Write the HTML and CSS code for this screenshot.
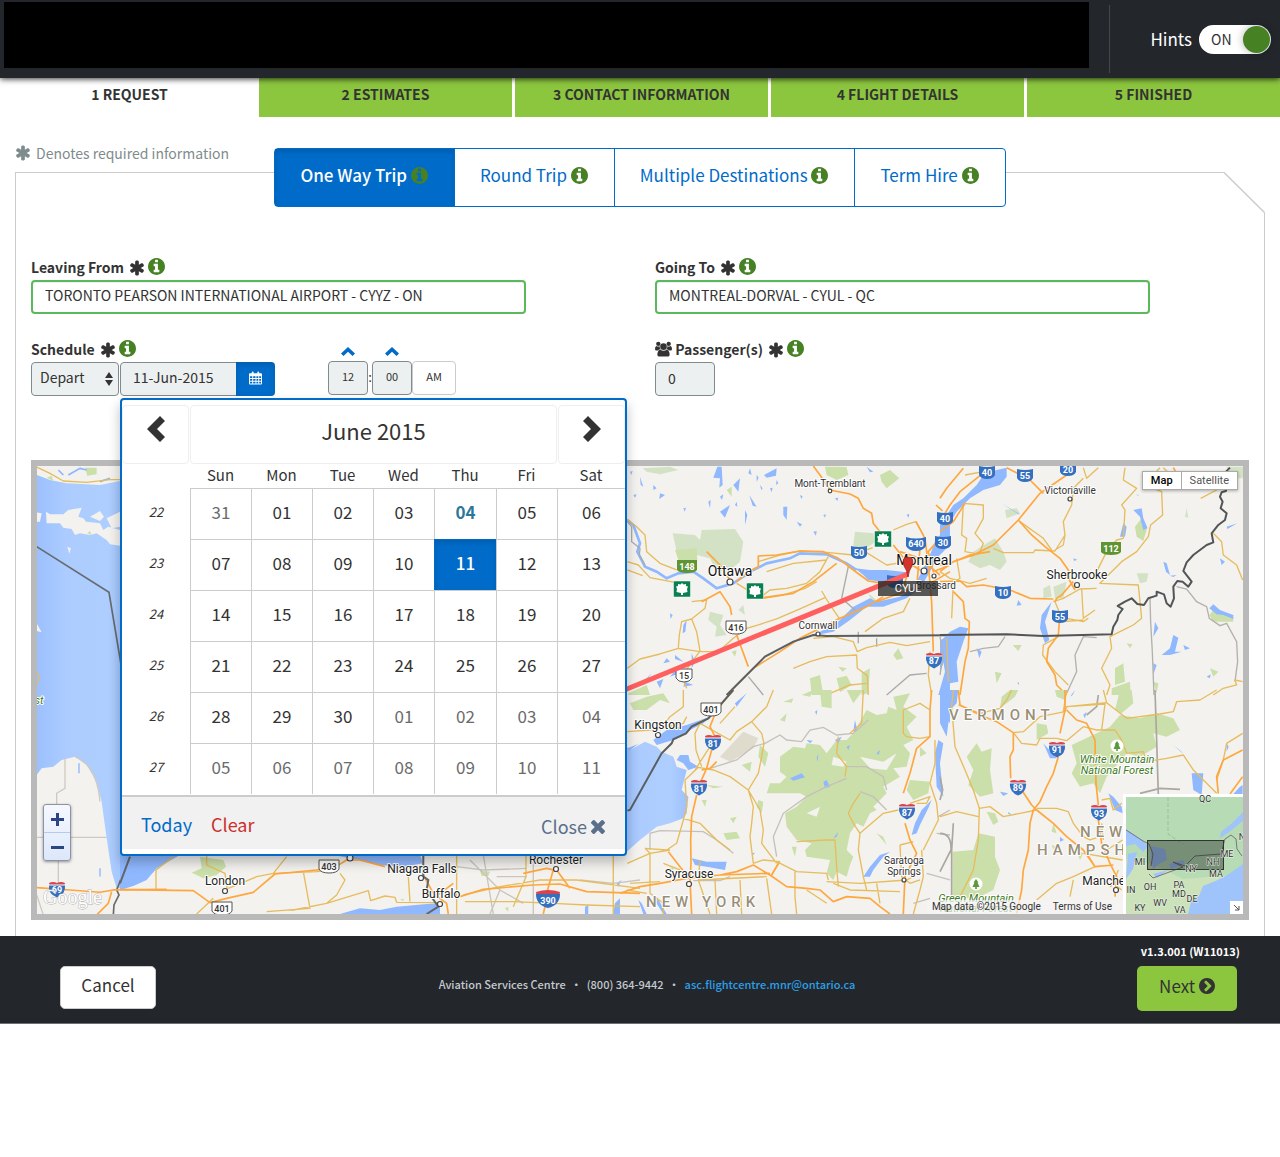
FILE: index.html
```html
<!DOCTYPE html>
<html lang="en">
<head>
<meta charset="utf-8">
<meta name="viewport" content="width=device-width, initial-scale=1">
<title>Flight Request</title>
<link rel="stylesheet" href="styles.css">
</head>
<body>
<svg class="sprite" aria-hidden="true">
  <symbol id="i-star" viewBox="64 64 1664 1664"><path d="M1546 1050q46 26 59.500 77.500t-12.500 97.500l-64 110q-26 46-77.500 59.500t-97.500-12.500l-266-153v307q0 52-38 90t-90 38h-128q-52 0-90-38t-38-90v-307l-266 153q-46 26-97.500 12.500t-77.500-59.500l-64-110q-26-46-12.500-97.500t59.500-77.500l266-154-266-154q-46-26-59.500-77.500t12.500-97.500l64-110q26-46 77.500-59.500t97.500 12.500l266 153v-307q0-52 38-90t90-38h128q52 0 90 38t38 90v307l266-153q46-26 97.500-12.500t77.500 59.500l64 110q26 46 12.500 97.500t-59.500 77.500l-266 154z"/></symbol>
  <symbol id="i-info" viewBox="128 128 1536 1536"><path d="M1152 1376v-160q0-14-9-23t-23-9h-96v-512q0-14-9-23t-23-9h-320q-14 0-23 9t-9 23v160q0 14 9 23t23 9h96v320h-96q-14 0-23 9t-9 23v160q0 14 9 23t23 9h448q14 0 23-9t9-23zm-128-896v-160q0-14-9-23t-23-9h-192q-14 0-23 9t-9 23v160q0 14 9 23t23 9h192q14 0 23-9t9-23zm640 416q0 209-103 385.500t-279.500 279.500-385.500 103-385.500-103-279.500-279.500-103-385.500 103-385.500 279.500-279.500 385.500-103 385.500 103 279.500 279.500 103 385.500z"/></symbol>
  <symbol id="i-times" viewBox="302 302 1188 1188"><path d="M1490 1322q0 40-28 68l-136 136q-28 28-68 28t-68-28l-294-294-294 294q-28 28-68 28t-68-28l-136-136q-28-28-28-68t28-68l294-294-294-294q-28-28-28-68t28-68l136-136q28-28 68-28t68 28l294 294 294-294q28-28 68-28t68 28l136 136q28 28 28 68t-28 68l-294 294 294 294q28 28 28 68z" transform="translate(0 -64)"/></symbol>
  <symbol id="i-next" viewBox="128 128 1536 1536"><path d="M845 1395l454-454q19-19 19-45t-19-45l-454-454q-19-19-45-19t-45 19l-102 102q-19 19-19 45t19 45l307 307-307 307q-19 19-19 45t19 45l102 102q19 19 45 19t45-19zm819-499q0 209-103 385.500t-279.500 279.500-385.500 103-385.500-103-279.500-279.500-103-385.500 103-385.500 279.500-279.500 385.500-103 385.500 103 279.500 279.500 103 385.500z"/></symbol>
  <symbol id="i-cal" viewBox="0 0 14 14"><path fill-rule="evenodd" d="M1 2h2V1q0-1 1-1t1 1v1h4V1q0-1 1-1t1 1v1h2q1 0 1 1v10q0 1-1 1H1q-1 0-1-1V3q0-1 1-1zM1 5v2h2.500V5zm3.500 0v2H7V5zM8 5v2h2V5zm3 0v2h2V5zM1 8v2h2.500V8zm3.500 0v2H7V8zM8 8v2h2V8zm3 0v2h2V8zM1 11v2h2.500v-2zm3.500 0v2H7v-2zM8 11v2h2v-2zm3 0v2h2v-2z"/></symbol>
  <symbol id="i-users" viewBox="0 0 18 16"><circle cx="3.500" cy="2.500" r="2.300"/><circle cx="14.500" cy="2.500" r="2.300"/><circle cx="9" cy="5.500" r="3.500"/><path d="M1.500 4.700Q3 5.900 5 5.200 4.700 7 6 8.600H4.200L3.500 9.500H1Q0 9.500 0 8q0-3 1.500-3.300zM16.500 4.700Q15 5.900 13 5.200 13.300 7 12 8.600h1.800l.7.9H17q1 0 1-1.500 0-3-1.500-3.300zM5.500 8.700Q9 11 12.500 8.700 15.500 9.500 15.500 14q0 2-2 2h-9q-2 0-2-2 0-4.500 3-5.300z"/></symbol>
  <symbol id="i-up" viewBox="0 0 14 9"><path d="M7 0l7 6.500L11.500 9 7 4.700 2.500 9 0 6.500z"/></symbol>
  <symbol id="i-left" viewBox="0 0 18 26"><path d="M13 0l5 5-8 8 8 8-5 5L0 13z"/></symbol>
  <symbol id="i-right" viewBox="0 0 18 26"><path d="M5 0L0 5l8 8-8 8 5 5 13-13z"/></symbol>
</svg>

<header class="topbar">
  <div class="brand"></div>
  <div class="hints">
    <label for="hints">Hints</label>
    <span class="switch"><input type="checkbox" id="hints" checked><span class="switch-text">ON</span></span>
  </div>
</header>

<nav class="steps">
  <a href="#" class="step current">1 REQUEST</a>
  <a href="#" class="step">2 ESTIMATES</a>
  <a href="#" class="step">3 CONTACT INFORMATION</a>
  <a href="#" class="step">4 FLIGHT DETAILS</a>
  <a href="#" class="step">5 FINISHED</a>
</nav>

<main class="page">
  <div class="trip-row">
    <p class="note"><svg class="star"><use href="#i-star"/></svg> Denotes required information</p>
    <div class="tabs">
      <button type="button" class="tab active">One Way Trip <svg class="info"><use href="#i-info"/></svg></button>
      <button type="button" class="tab">Round Trip <svg class="info"><use href="#i-info"/></svg></button>
      <button type="button" class="tab">Multiple Destinations <svg class="info"><use href="#i-info"/></svg></button>
      <button type="button" class="tab">Term Hire <svg class="info"><use href="#i-info"/></svg></button>
    </div>
  </div>

  <form class="panel">
    <svg class="corner" viewBox="0 0 41 41"><path d="M0 0H41V41z" fill="#fff"/><path d="M0 .500L40.500 40.500" stroke="#ccc" stroke-width="1.500" fill="none"/></svg>
    <div class="fields">
      <div class="field">
        <label for="from">Leaving From <svg class="star"><use href="#i-star"/></svg><svg class="info"><use href="#i-info"/></svg></label>
        <input class="box airport" id="from" type="text" value="TORONTO PEARSON INTERNATIONAL AIRPORT - CYYZ - ON">
      </div>
      <div class="field">
        <label for="to">Going To <svg class="star"><use href="#i-star"/></svg><svg class="info"><use href="#i-info"/></svg></label>
        <input class="box airport" id="to" type="text" value="MONTREAL-DORVAL - CYUL - QC">
      </div>
      <div class="schedule">
        <div class="field">
          <label for="date">Schedule <svg class="star"><use href="#i-star"/></svg><svg class="info"><use href="#i-info"/></svg></label>
          <div class="date-row">
            <span class="select-wrap">
              <select class="box" aria-label="Schedule type"><option>Depart</option><option>Arrive</option></select>
              <svg class="updown" viewBox="0 0 8 14"><path d="M4 0l4 6H0zM4 14l4-6H0z"/></svg>
            </span>
            <input class="box date" id="date" type="text" value="11-Jun-2015">
            <button type="button" class="cal-btn" aria-label="Open calendar"><svg><use href="#i-cal"/></svg></button>
          </div>
        </div>
        <div class="time">
          <div class="spin"><button type="button" aria-label="Hour up"><svg><use href="#i-up"/></svg></button><input class="box" type="text" value="12" aria-label="Hour"></div>
          <span class="colon">:</span>
          <div class="spin"><button type="button" aria-label="Minute up"><svg><use href="#i-up"/></svg></button><input class="box" type="text" value="00" aria-label="Minute"></div>
          <button type="button" class="ampm">AM</button>
        </div>

        <div class="picker">
          <div class="picker-head">
            <button type="button" aria-label="Previous month"><svg><use href="#i-left"/></svg></button>
            <button type="button" class="month">June 2015</button>
            <button type="button" aria-label="Next month"><svg><use href="#i-right"/></svg></button>
          </div>
          <table>
            <colgroup><col class="c-week"><col class="c-day"><col class="c-day"><col class="c-day"><col class="c-day"><col class="c-thu"><col class="c-day"><col class="c-sat"></colgroup>
            <thead><tr><th></th><th>Sun</th><th>Mon</th><th>Tue</th><th>Wed</th><th>Thu</th><th>Fri</th><th>Sat</th></tr></thead>
            <tbody>
              <tr><th>22</th><td class="out">31</td><td>01</td><td>02</td><td>03</td><td class="today">04</td><td>05</td><td>06</td></tr>
              <tr><th>23</th><td>07</td><td>08</td><td>09</td><td>10</td><td class="picked">11</td><td>12</td><td>13</td></tr>
              <tr><th>24</th><td>14</td><td>15</td><td>16</td><td>17</td><td>18</td><td>19</td><td>20</td></tr>
              <tr><th>25</th><td>21</td><td>22</td><td>23</td><td>24</td><td>25</td><td>26</td><td>27</td></tr>
              <tr><th>26</th><td>28</td><td>29</td><td>30</td><td class="out">01</td><td class="out">02</td><td class="out">03</td><td class="out">04</td></tr>
              <tr><th>27</th><td class="out">05</td><td class="out">06</td><td class="out">07</td><td class="out">08</td><td class="out">09</td><td class="out">10</td><td class="out">11</td></tr>
            </tbody>
          </table>
          <div class="picker-foot">
            <button type="button" class="go-today">Today</button>
            <button type="button" class="clear">Clear</button>
            <button type="button" class="close">Close <svg><use href="#i-times"/></svg></button>
          </div>
        </div>
      </div>
      <div class="field">
        <label for="pax"><svg class="users"><use href="#i-users"/></svg> Passenger(s) <svg class="star"><use href="#i-star"/></svg><svg class="info"><use href="#i-info"/></svg></label>
        <input class="box pax" id="pax" type="text" value="0">
      </div>
    </div>

    <div class="map">
      <svg class="map-art" viewBox="37 466 1206 448" preserveAspectRatio="xMidYMid slice">
        <defs>
          <linearGradient id="lake" x1="0" x2="1"><stop offset="0" stop-color="#9cc0ff"/><stop offset=".3" stop-color="#acccff"/><stop offset=".75" stop-color="#aeceff"/><stop offset="1" stop-color="#9cc0ff"/></linearGradient>
          <g id="inter"><path d="M-8-6Q-4-8 0-6 4-8 8-6L7-2H-7z" fill="#d8434e"/><path d="M-8-4H8Q9 5 0 8.500-9 5-8-4z" fill="#3470bf"/><path d="M-8-4H8" stroke="#fff" fill="none"/></g>
          <path id="tc" d="M-8-6Q0-4 8-6V3Q6 7 0 7T-8 3z" fill="#3470bf"/>
          <path id="gr" d="M-10-6H10V4Q8 7 0 7T-10 4z" fill="#5f9433"/>
          <path id="crest" d="M-10-6H10V3Q8 7 0 7T-10 3z" fill="#fff" stroke="#555"/>
          <g id="maple"><rect x="-8.500" y="-8" width="17" height="16" rx="1" fill="#0a8052" stroke="#fff" stroke-width=".5"/><path d="M0-6L1.500-4.500 4-5 4-3 6-2.500 5 0 5.500 3 1 4V6H-1V4L-5.500 3-5 0-6-2.500-4-3-4-5-1.500-4.500z" fill="#fff"/></g>
          <g id="tree"><circle r="6.500" fill="#fff"/><path d="M0-5L2.500-1.500H1.500L3.500 3H.8V5H-.8V3H-3.500L-1.500-1.500H-2.500z" fill="#5b9a3c"/></g>
        </defs>
        <rect x="37" y="466" width="1206" height="448" fill="#f3f2ef"/>

        <!-- Lake Huron and the western shore -->
        <g transform="translate(0 455) scale(.3333)">
          <path d="M110 60L150 75 200 85 300 90 400 70V1260L380 1300 350 1300 335 1250 320 1150 305 1040 290 980 260 930 225 905 185 915 160 935 125 940 110 960z" fill="url(#lake)"/>
          <path d="M138 170L150 178 190 178 205 165 245 158 235 185 250 190 258 200 300 205 310 225 325 215 360 225V272L330 268 320 255 290 235 270 240 240 235 225 240 215 222 190 218 180 205 140 205zM110 172L125 175 120 200 110 200zM270 185L300 168 312 185 300 198zM320 190L360 170V215L335 220zM202 275L213 280 208 296zM110 505L125 532 110 528z" fill="#f3f2ef"/>
          <path d="M255 38H290V58L262 62zM140 68L155 62 160 78zM262 235L270 228 275 240z" fill="#cbdfaa"/>
          <path d="M205 60L240 40 260 45M175 45L190 60M300 80L330 70" stroke="#8db5ff" stroke-width="5" fill="none"/>
          <path class="road" d="M110 36L150 55 190 78 260 82 330 74 400 74M110 650Q122 665 110 690"/>
          <path d="M110 275L327 412 375 700M395 1190L350 1305 357 1320 342 1350 340 1380" stroke="#666b6e" stroke-width="5" fill="none"/>
          <path d="M195 910V1000L170 1015V1060M110 1147H320M175 1200V1300M110 1320L130 1380M225 905Q290 930 300 1040" stroke="#cfcac0" stroke-width="4" fill="none"/>
          <path class="highway" d="M110 1298L220 1306 300 1312 340 1305 500 1303M335 1310L325 1345 290 1380"/>
          <path d="M237 925V955M300 1240V1265" stroke="#8db5ff" stroke-width="4"/>
        </g>

        <!-- Southern Ontario and Lake Erie -->
        <g transform="translate(120 840) scale(.3333)">
          <path d="M0 45H180L110 85 80 120 40 138 0 150zM640 45H900L910 70 850 80 780 75 720 60zM660 222L720 205 780 210 830 200 920 192 960 190V222zM1395 200L1405 196V222H1395zM1485 190L1500 175 1500 222H1480zM1490 130L1505 120 1495 140z" fill="#8fb8ff"/>
          <path d="M240 50L310 60 318 80 290 105 250 115 215 98 245 85zM1080 92L1110 95 1105 108 1085 108zM840 178L850 176 852 184zM1155 205L1165 200V215z" fill="#cbdfaa"/>
          <path d="M1050 60L1090 100 1140 150 1210 190M1090 45L1120 222M1240 65V222M1380 120L1480 130 1560 120M1140 150L1110 222M1010 80L1090 90 1220 85M1130 110L1220 110" stroke="#c9c5bd" stroke-width="4" fill="none"/>
          <path class="road" d="M108 150V90L160 50M260 45V75L315 100 322 150M325 145L410 110 460 100 500 50M460 100L590 95 650 88M550 95L570 205 440 215M660 100L675 120 650 165 620 190 520 210M620 190L745 152 752 182 795 168 825 172 830 187 960 188M865 110L870 185M1010 45V222M1030 165L1140 140 1260 120 1370 120 1560 145M1035 185H1180L1300 190 1400 195 1560 200M1480 45V222M1218 45V110L1180 200M280 175L230 222"/>
          <path class="highway" d="M0 149L220 152 270 188 320 175 400 157 465 102 590 90 640 85 680 60 720 60 795 80M910 105L940 160 980 190 985 222M1000 130L940 175M1020 170L1090 148 1240 135 1320 132 1400 155 1560 160M1300 90L1280 160M1310 90L1350 145M1210 100L1280 85 1310 92M1275 200L1270 222"/>
          <path d="M910 45V110L925 120 920 150 955 200 920 222M30 50L0 130" stroke="#666" stroke-width="6" fill="none"/>
        </g>

        <!-- Ottawa valley and Montreal -->
        <g transform="translate(620 455) scale(.3333)">
          <g fill="#d3e2c4"><path d="M158 235L225 240 240 255 245 225 345 222 370 260 360 320 330 345 290 350 270 310 230 300 170 290zM270 470L310 480 300 510 320 540 285 545 290 515 265 495zM705 230L760 235 765 262 720 290 700 270zM68 40L150 35 175 45 120 58 80 50zM355 465L370 450 375 480zM745 415L775 440 760 450z"/></g>
          <g fill="#cbdfaa"><path d="M165 285L230 280 232 318 180 330zM615 35L680 36 685 60 650 75 620 60zM780 60L810 45 838 70 800 100 785 80zM320 105L335 95 335 125zM570 670L600 660 610 720H575zM650 670L680 662 695 690 660 712zM655 635L680 640 668 650zM725 655L750 640 745 715 725 720zM820 600L835 580 850 610 830 615zM335 590L350 585 345 605zM25 715L80 690 90 720H25zM920 610L935 605 930 640z"/></g>
          <g fill="#8fb8ff"><path d="M292 35H305L308 90 298 98 300 70 280 68zM120 115L135 120 118 132zM300 170L330 150 315 188zM340 90L360 70 355 110zM375 165L382 180 375 210zM388 120L410 155 398 152zM432 60L470 40 468 62 440 68zM490 155L502 155 500 195 490 180zM60 65L70 95 62 90zM150 475L158 480 152 492zM190 510L200 495 196 530 188 535zM265 140L272 135 270 160zM740 35L760 50 750 52zM690 75L700 95 694 92zM530 200L546 208 540 215zM410 60L416 68 410 80zM100 90L110 100 100 105zM580 230L590 228 588 242zM645 130L655 128 652 138zM470 75L475 85 468 90zM300 125L310 118 306 135zM420 90L428 100 424 105zM350 140L352 155 345 150zM390 40L395 60 385 55zM450 100L458 98 455 112zM40 120L50 118 45 128zM190 160L198 158 194 170zM540 120L548 124 544 132zM610 180L618 178 615 188zM860 180L868 176 866 188zM30 50L38 48 34 60z"/>
          <path d="M705 340L750 345 800 345 860 352 850 365 790 380 745 375 730 360zM600 530L650 505 700 455 750 430 770 440 840 425 880 400 930 300 945 260 990 200V270L950 310 930 350 900 400 860 430 790 455 740 455 690 495 640 530 560 545zM960 555L990 545V720H955L975 650z"/><path d="M215 595L225 620 215 640zM170 640L190 650 150 665zM60 690L95 655 70 690zM165 600L190 620 165 612zM195 680L220 690 190 695zM140 610L150 620 130 625zM110 680L130 672 120 700z"/></g>
          <path d="M22 195L40 210 60 265 52 290 75 335 110 350 140 370 175 355 220 350 250 370 290 400 340 385 400 345 440 325 510 310 540 295 620 298 680 325 710 345" stroke="#8fb8ff" stroke-width="8" fill="none"/>
          <path d="M22 200L35 215V260L60 280 58 300 75 330M685 335L665 430 705 465M385 665L430 720M715 530V565M770 550V575M800 720L870 660 920 655" stroke="#aaa" stroke-width="4" fill="none"/>
          <path class="road" d="M22 193L50 215 75 240 80 290 120 325 170 345M22 320L55 330 90 368 165 382M22 345L68 362M22 640L60 612 120 597 175 580 240 590 295 590 340 550 380 520 420 508 470 492 540 462 615 428M215 440L260 435 255 460 215 492 185 500 178 540 175 578M215 492L230 530 240 588 195 650M415 320L480 300 540 288 620 292 700 300 740 285 758 278M440 350L520 325 620 315M350 385L420 428 450 405 500 400 560 385 600 350 625 305M605 408L630 450 658 490M430 430L490 420 555 400 590 380M580 550L640 545 700 560 712 590 740 578 810 562 860 572 930 560M735 530L790 490 850 470 870 430M520 640L570 620 620 605 710 600 712 640 742 662 745 720M820 225L860 208 888 200 910 240M735 290L800 330 830 325M175 640L200 700M930 590L925 660 935 720M620 720L690 690 740 685"/>
          <path class="highway" d="M260 290L300 330 330 375M350 380L385 350 415 335 415 303 470 300 540 288 610 290 655 310 700 345 745 378 790 385M380 400L430 428 520 415 580 380 650 325M245 440L300 410 330 455 335 480M350 540L385 635M580 33L600 60 630 105 690 117 715 130 730 160 755 175 760 205 780 230M820 270L860 320 900 345M320 720L400 640 480 590 540 550 600 520 660 490 740 455 790 425M888 200L915 250 925 330 935 440 940 590M948 150L968 168M960 250L925 290 940 350 990 330M770 440L840 415 940 380 990 350M840 290L900 310 960 360M870 330L850 400M900 280L890 400"/>
          <path d="M320 720L435 605 520 560 580 540 620 543 990 541" stroke="#5b5f61" stroke-width="6" fill="none"/>
        </g>

        <!-- Eastern Townships and Maine -->
        <g transform="translate(940 455) scale(.3333)">
          <g fill="#d3e2c4"><path d="M85 320L100 290 140 265 165 250 190 290 200 320 180 345 150 330 120 340zM195 165L230 160 240 175 200 190zM590 355L625 355 620 380 600 385zM735 185L740 160 745 188zM310 400L330 390 335 425 310 430zM860 35H910V70H870zM340 395L380 380 370 430 345 430z"/></g>
          <g fill="#cbdfaa"><path d="M585 215L605 190 620 225 610 258 590 245zM808 480L820 465 880 490 880 500 820 500zM218 570L245 570 235 588zM525 640L550 625 555 680 525 690zM515 700L570 680 572 720H515zM640 680L655 685 650 715zM810 640L835 650 820 665zM165 650L185 655 170 685zM560 565L578 568 570 580z"/></g>
          <g fill="#8fb8ff"><path d="M70 130L110 90 130 60 170 45 200 38 200 65 180 90 130 105 90 130 50 170 20 220 0 250V210L40 150zM550 205L560 215 555 245 540 245zM580 165L605 160 610 190 623 220 610 225 600 185zM670 320L680 325 690 360 678 350zM700 540L715 548 705 590 725 590 690 600 665 600 690 580zM808 460L820 448 840 465 880 480 880 492 850 480 830 478zM645 500L655 520 640 545zM305 480L335 440 315 500 328 555 315 565 300 520zM60 515L85 520 70 560 50 620 55 680 30 685 20 600 0 650V560L30 530zM235 435L245 450 230 452zM840 310L855 320 845 330zM860 215L892 205 862 222zM185 145L240 178 235 178zM730 570L750 580 735 585zM640 625L650 630 640 660zM800 665L812 658 810 670zM590 118L600 124 590 120zM400 310L412 314 402 318zM690 362L710 360 700 366zM110 580L125 590 118 610zM235 680L238 690 232 685z"/></g>
          <path d="M630 430L632 500 637 590 642 720M0 545L10 600 0 660M710 395L740 402 770 440 800 455 808 490 840 512 860 505 890 560 893 620 885 680M405 600L430 545 470 548M90 590L130 580 175 575 195 545M405 600L410 650 380 715" stroke="#b4b1ac" stroke-width="4" fill="none"/>
          <path class="road" d="M70 145L130 150 130 190 105 235 130 265 118 295 90 305M70 145L65 240 80 250 75 290 105 295M160 280L190 293 280 293 285 285 345 288 375 240 370 200 395 150 400 100 430 70M345 285L370 270 375 240M430 38L440 70 475 38M555 38L550 75 590 100 545 150 555 165 550 250 530 255 500 290 470 350M660 38L610 90 665 110 668 180 632 210 625 245 590 290 545 320 480 385 595 390 605 490 580 510 540 530 510 545 515 580 485 640 510 690 500 720M425 400L430 490 465 465M380 490L430 500 445 490M345 440L370 500 430 495M670 38L710 75 720 100M470 400L420 402 370 430 340 440M782 130L830 105M820 235L845 260 850 300 890 330 908 375M820 720L850 700 890 690 885 675 908 680M140 370L90 385 30 370 0 350M40 380L35 490M50 310L60 370 20 400M240 200L310 250 335 285M355 545L310 570 308 600 345 650 385 690M20 550L25 680M75 60L130 50"/>
          <path class="highway" d="M380 60L300 115 235 195 160 270 100 300 40 320 0 350M310 115L270 75 200 38M235 195L275 240 315 275 360 310 385 345 388 375 405 405M0 330L30 325 90 300 150 290M0 380L60 378 80 395 130 390 210 405 270 430 340 432M400 380L365 420 350 430 345 440M358 500L355 540 325 580 320 620 345 660 350 690 380 720M70 40L20 100 0 130M150 38L60 110 30 150 0 200M75 145L40 200 0 230M40 410L70 440 75 490 88 500 85 580 75 620 60 720M700 38L710 55"/>
          <path d="M0 540L200 538 310 543 515 538 520 515 532 495 535 480 548 462 533 453 555 440 575 430 592 447 612 450 625 430 650 422 650 410 672 418 680 445 692 455 702 430 700 395 712 378 728 380 745 395 755 380 730 348 740 322 760 300 800 270 820 262 815 235 835 210 855 195 860 175 842 160 848 140 840 125 845 112 858 108 858 50 870 38" stroke="#515557" stroke-width="6" fill="none" stroke-linejoin="round"/>
        </g>

        <!-- Lake Ontario, Adirondacks -->
        <g transform="translate(620 690) scale(.3333)">
          <path d="M0 150L30 180 75 155 110 170 125 185 160 200 170 230 200 240 185 300 205 320 200 370 190 385 150 400 110 410 60 450 20 485 0 490z" fill="url(#lake)"/>
          <path d="M100 150L140 120 200 105 270 80 250 100 210 120 160 150 110 165zM180 195L205 195 210 215 235 230 205 240 190 220 170 210z" fill="#8fb8ff"/>
          <path d="M22 175L60 160 50 165 28 182z" fill="#8fb8ff"/>
          <g fill="#cbdfaa"><path d="M480 200L520 170 555 175 560 160 600 165 620 190 650 150 680 150 700 130 720 95 740 60 770 75 800 70 805 50 830 60 820 20 870 10 850 50 890 80 860 110 880 150 850 165 870 190 860 230 820 235 840 260 790 290 800 310 760 350 770 360 750 370 730 410 710 400 690 430 680 480 700 500 690 525 680 560 650 545 640 570 620 550 630 510 560 500 555 480 575 460 530 450 500 410 495 370 530 350 560 320 540 310 440 310 450 280 480 280 500 260 480 245z"/><path d="M870 270L930 275 925 310 880 330 860 300zM30 40L80 20 130 10 150 40 120 30 80 60 40 60zM600 0H635V55L605 50zM680 0H730L700 40zM420 165L445 190 435 230 415 200zM365 225L395 215 390 245zM415 330L430 335 425 370 410 350zM310 430L350 425 360 445 320 450zM245 330L260 330 255 350zM260 285L310 290 280 295zM330 385L350 380 340 400zM490 35L520 25 515 38zM480 90L500 70 495 95zM900 170L920 190 900 200zM515 470L530 470 525 500zM545 15L580 0 570 20zM145 535L165 530 150 550zM770 430L790 440 800 465z"/></g>
          <path d="M640 200L680 215 670 230 635 225zM720 200L790 215 830 190 800 240 750 235zM560 370L600 350 590 380z" fill="#f3f2ef"/>
          <path d="M300 200L370 125 415 145 400 175 330 215z" fill="#dfdccd"/>
          <g fill="#8fb8ff"><path d="M215 505L260 515 320 515 315 540 260 530 225 525zM875 435L885 400 905 360 935 330 925 355 900 405 890 430zM730 560L750 530 780 495 810 485 790 500 760 540 750 560zM960 0L990 20V100L975 80 960 40zM945 190L955 150 970 160 960 220 970 320 950 290zM510 265L545 250 555 262 520 272zM610 275L620 270 630 290 615 295zM645 150L665 140 655 160zM560 150L578 152 570 160zM345 40L380 10 350 50zM100 625L110 620 140 672H130zM55 630L65 640 80 672H70zM395 490L405 488 400 495zM640 445L655 425 650 440zM585 65L592 60 590 75zM590 205L595 190 593 215zM705 90L712 120 700 125zM680 170L690 165 685 180zM770 190L780 180 776 195z"/></g>
          <path d="M435 160L480 135 500 150 545 155 570 120 610 112 650 135 700 130 745 90M270 235L350 210 400 170 435 160M90 480V430L120 422 250 425 290 450 340 490M460 440L490 370 560 320 620 290 680 265M680 230L740 230 790 260 800 300M720 305L760 320 800 360M460 440L470 500M950 430L990 435M880 640L930 625M920 550L990 570M220 572H300L330 560M955 380L990 360" stroke="#c5c1ba" stroke-width="4" fill="none"/>
          <path class="road" d="M22 125L90 120 190 100 200 80M120 120L150 80 190 50 190 0M460 0L440 50 395 95 350 125 330 150 240 100M395 95L425 130 432 160 425 200 415 250 385 300 330 260 280 240 235 232 195 270M245 90L225 130 228 180 245 230M385 300L420 360 430 420 425 460 470 520M300 100L345 50M225 240L270 170M195 270L200 350 190 390 170 460 140 480 75 475M190 385L240 400 290 450 330 480M22 520L90 490 150 480M385 300L400 350 395 400 390 440 400 520M75 475L90 490V610L130 640V672M240 510L235 570 270 672M400 520L430 510 480 515M470 515L530 545 620 550 625 570M480 515L455 555M525 545L525 620 530 672M440 565L455 672M285 570L290 672M235 570L440 560M360 570L365 672M530 455L620 450 645 450 650 530 655 590M720 310L700 340 685 370 700 400 720 430M655 140L650 190 680 230 675 260M720 430L715 480 730 560 740 600M720 430L790 370 835 360M850 60V130L860 140 900 145 930 140M850 60L900 40 930 60M730 0L725 100 690 130M620 575L720 580 860 570 880 560M640 580L690 600 840 605M870 340L930 320 920 340 890 340M905 480L910 560 900 600 880 672M945 150L945 220 930 280 950 340 955 390 910 480M840 465L845 560 870 580 900 570M840 465L880 455M30 580L120 575M130 520L180 540M20 600L80 610M770 580L780 640M560 600L620 640"/>
          <path class="highway" d="M340 0L290 60 270 110 285 140M275 180L260 235 240 280M230 315L215 380 212 450 213 520 210 570 215 672M290 215L270 235 245 240M0 610L60 590 120 580 200 565 300 555 350 545 400 525 450 555 500 590 560 595 600 600 640 635 680 620 750 625 780 650 810 672M935 0L930 60 930 140 890 175 870 250 850 310M855 400L870 450 890 490 855 560 850 672M145 485L180 530 200 555M300 555L450 550M455 555L475 520"/>
          <path d="M22 362L30 360 125 190 155 160 160 148 198 130 215 110 265 85 305 40 340 0" stroke="#5b5f61" stroke-width="6" fill="none"/>
        </g>

        <!-- Vermont and New Hampshire -->
        <g transform="translate(940 690) scale(.3333)">
          <path d="M0 0H55L50 40 30 60 20 140 0 100zM755 250L790 250 785 315 760 300zM505 310L520 320 545 350 548 370 525 360zM310 160L350 205 330 205zM430 75L440 65 435 85zM900 290L908 285V312H880zM860 160L866 170 860 185zM700 165L730 190 722 185zM405 0L390 20 398 15zM180 305L205 310 190 318zM205 365L215 375 205 372zM0 265L8 290 0 290zM360 440L372 450 360 455zM155 440L160 470 150 465z" fill="#8fb8ff"/>
          <path d="M110 160L125 185 155 175 150 240 160 310 120 320 85 285 100 240 80 200zM395 165L470 130 510 110 540 75 600 85 650 70 700 85 720 120 680 140 640 130 650 170 600 200 560 190 500 260 480 310 460 280 420 290 395 250 410 220zM38 485L100 480 115 430 165 440 165 500 180 540 160 600 110 625H38zM210 0L235 0 225 20 180 55 185 20zM540 0L575 0 580 40 545 70 525 60zM345 0H375V30L350 20zM140 365L165 370 175 395 160 405zM290 100L320 105 325 130 290 150zM340 400L350 430 335 425zM410 480L430 490 420 510zM335 465L350 470 340 478z" fill="#cbdfaa"/>
          <path d="M645 0L650 150 655 312M40 400L35 480V625M0 260L8 300 0 330M0 430Q35 430 33 480L0 545M600 310L660 295 720 298M475 15L470 50 440 75" stroke="#aaa6a0" stroke-width="5" fill="none"/>
          <path class="road" d="M40 0L35 50 45 170 75 240 100 300 118 355 115 450 100 540 60 620M215 0L200 30 180 55 120 70 55 45M220 128L250 125 300 80 375 65 380 50 500 38 560 85 660 72 700 65 710 35 780 30 830 0M500 38L490 0M380 50L495 42 485 120M220 128L245 160 290 165 300 145 350 145 380 152M380 152L430 110 470 120 525 120 545 150 560 190 610 185 620 215 680 205 730 195 760 240 830 310M118 355L150 350 190 380 240 370 290 360M0 380L50 365 115 380M290 355L350 355 385 365 400 400 430 440M485 330L510 325 520 360 545 340M430 440L450 450 480 440M465 530L400 560 350 580 290 630M535 540L520 580 545 600M485 400L490 450M370 65L380 0M830 270L850 210 860 160 908 130M400 570L390 620M500 480L548 450M430 490L548 510"/>
          <path class="highway" d="M55 0L60 45 120 75 170 95 220 128 220 180 210 200 212 265M245 300L275 345 290 360M375 0L375 60 360 130M355 200L340 250 320 290 300 335 280 360 270 400 265 480 250 540 245 600 230 670M380 60L410 90 440 100 465 150 468 280 475 345M475 390L485 460 510 520 530 560 525 620M290 360L340 400 380 440 430 480 465 530 520 525M835 310L830 260 850 210 908 180M870 312L908 260M550 560L510 590M465 530L440 490"/>
        </g>

        <!-- Markers of places -->
        <g fill="#fff" stroke="#444" stroke-width="1.200">
          <circle cx="830" cy="491" r="1.800"/><circle cx="730" cy="582" r="3"/><circle cx="818" cy="634" r="2"/><circle cx="924" cy="571" r="3"/><circle cx="934" cy="576" r="2"/><circle cx="1070" cy="499" r="2"/><circle cx="1077" cy="585" r="2.500"/><circle cx="658" cy="735" r="2.500"/><circle cx="689" cy="884" r="2.500"/><circle cx="904" cy="880" r="2"/><circle cx="1116" cy="890" r="2.500"/><circle cx="225" cy="891" r="2.500"/><circle cx="350" cy="858" r="3"/><circle cx="421" cy="878" r="2.500"/><circle cx="440" cy="904" r="2.500"/><circle cx="556" cy="869" r="2.500"/>
        </g>

        <!-- Highway shields -->
        <use href="#tc" x="987" y="472"/><use href="#tc" x="1025" y="475"/><use href="#tc" x="1068" y="469"/><use href="#tc" x="945" y="518"/><use href="#tc" x="943" y="542"/><use href="#tc" x="859" y="552"/><use href="#tc" x="1003" y="592"/><use href="#tc" x="1060" y="616"/><use href="#tc" x="895" y="581"/>
        <path d="M906 537Q916 540 926 537V546Q923 551 916 551T906 546z" fill="#3470bf"/>
        <use href="#gr" x="687" y="566"/><use href="#gr" x="1111" y="548"/>
        <use href="#crest" x="736" y="627"/><use href="#crest" x="711" y="709"/><use href="#crest" x="329" y="866"/><use href="#crest" x="222" y="908"/>
        <path d="M676 669H692V678Q690 682 684 682T676 678z" fill="#fff" stroke="#555"/>
        <use href="#inter" x="934" y="660"/><use href="#inter" x="713" y="742"/><use href="#inter" x="699" y="787"/><use href="#inter" x="907" y="811"/><use href="#inter" x="1057" y="749"/><use href="#inter" x="1018" y="787"/><use href="#inter" x="1099" y="812"/><use href="#inter" x="57" y="889"/>
        <path d="M536 892Q548 888 560 892L559 897H537z" fill="#d8434e"/><path d="M536 894H560Q560 905 548 908 536 905 536 894z" fill="#3470bf"/>
        <use href="#maple" x="883" y="539"/><use href="#maple" x="682" y="589"/><use href="#maple" x="755" y="591"/>
        <use href="#tree" x="1117" y="746"/><use href="#tree" x="976" y="884"/>
        <g class="shield-text">
          <text x="987" y="476">40</text><text x="1025" y="479">55</text><text x="1068" y="473">20</text><text x="945" y="522">40</text><text x="943" y="546">30</text><text x="859" y="556">50</text><text x="1003" y="596">10</text><text x="1060" y="620">55</text><text x="916" y="547">640</text><text x="687" y="570">148</text><text x="1111" y="552">112</text><text x="934" y="664">87</text><text x="713" y="747">81</text><text x="699" y="792">81</text><text x="907" y="816">87</text><text x="1057" y="753">91</text><text x="1018" y="791">89</text><text x="1099" y="817">93</text><text x="57" y="893">69</text><text x="548" y="904">390</text>
        </g>
        <g class="crest-text"><text x="736" y="631">416</text><text x="684" y="679">15</text><text x="711" y="713">401</text><text x="329" y="870">403</text><text x="222" y="912">401</text></g>

        <!-- Place names -->
        <g class="town"><text x="830" y="487">Mont-Tremblant</text><text x="1070" y="494">Victoriaville</text><text x="818" y="629">Cornwall</text><text x="904" y="864">Saratoga</text><text x="904" y="875">Springs</text><text x="936" y="589">Brossard</text></g>
        <g class="city"><text x="1077" y="579">Sherbrooke</text><text x="658" y="729">Kingston</text><text x="689" y="878">Syracuse</text><text x="225" y="885">London</text><text x="422" y="873">Niagara Falls</text><text x="441" y="898">Buffalo</text><text x="556" y="864">Rochester</text><text x="1114" y="885">Manchester</text></g>
        <g class="metro"><text x="730" y="576">Ottawa</text><text x="924" y="565">Montreal</text></g>
        <g class="state"><text x="949" y="720">VERMONT</text><text x="646" y="907">NEW YORK</text><text x="1080" y="837">NEW</text><text x="1037" y="855">HAMPSHIRE</text></g>
        <g class="forest"><text x="1117" y="763">White Mountain</text><text x="1117" y="774">National Forest</text><text x="976" y="902">Green Mountain</text><text x="976" y="912">National Forest</text><text x="39" y="704">st</text></g>

        <!-- Flight path and destination -->
        <path d="M600 700L908 574" stroke="#ff5f5f" stroke-width="5" fill="none"/>
        <rect x="878" y="581" width="60" height="15" fill="#222" fill-opacity=".75"/>
        <text class="pin-text" x="908" y="592">CYUL</text>
        <path d="M908 577Q907 570 904 566 901 557 908 557T912 566Q909 570 908 577z" fill="#d3312c" stroke="#8d1a18" stroke-width=".7"/>

        <text class="google" x="43" y="904">Google</text>
        <rect x="927" y="900" width="196" height="14" fill="#f5f5f5" fill-opacity=".7"/>
      </svg>

      <div class="map-type"><button type="button" class="on">Map</button><button type="button">Satellite</button></div>
      <div class="map-zoom"><button type="button" aria-label="Zoom in"><svg viewBox="0 0 13 13"><path d="M5 0h3v5h5v3H8v5H5V8H0V5h5z"/></svg></button><button type="button" aria-label="Zoom out"><svg viewBox="0 0 13 13"><path d="M0 5h13v3H0z"/></svg></button></div>
      <p class="map-legal"><span>Map data ©2015 Google</span><a href="#">Terms of Use</a></p>
      <svg class="inset" viewBox="0 0 120 120">
        <rect width="120" height="120" fill="#fff"/>
        <rect x="3" y="3" width="117" height="117" fill="#b7dcb5"/>
        <path d="M3 65L30 70 60 85 120 80V120H3z" fill="#cbe2ba"/>
        <path d="M3 35L18 45 25 52 20 58 12 50 3 52zM5 60L14 58 10 75 3 85zM28 52L42 55 44 66 36 70 30 75 28 62zM46 70L60 66 62 70 48 75zM30 80L45 76 34 84zM120 18L108 30 98 38 97 44 106 38 120 27zM120 70L106 80 95 86 80 92 76 102 68 108 65 120H120z" fill="#9fc3fb"/>
        <path d="M3 36L20 47 26 50 30 60 28 72M26 80L30 84 60 73 50 68 62 72 72 62 98 60 102 45 108 41 113 45 114 55 119 62" stroke="#777" fill="none"/>
        <path d="M45 3V40L60 50" stroke="#9cbf9a" stroke-dasharray="4 2" fill="none"/>
        <rect x="24.500" y="46.500" width="76" height="29" fill="#000" fill-opacity=".35" stroke="#333"/>
        <g><text x="17" y="71">MI</text><text x="8" y="99">IN</text><text x="27" y="96">OH</text><text x="56" y="94">PA</text><text x="56" y="103">MD</text><text x="69" y="108">DE</text><text x="17" y="117">KY</text><text x="37" y="112">WV</text><text x="57" y="119">VA</text><text x="68" y="78">NY</text><text x="90" y="71">NH</text><text x="93" y="83">MA</text><text x="104" y="63">ME</text><text x="82" y="8">QC</text><text x="119" y="46">N</text></g>
        <rect x="107" y="107" width="13" height="13" fill="#fff"/><path d="M111 111l5 5m0-4v4h-4" stroke="#555" fill="none"/>
      </svg>
    </div>
  </form>
</main>

<footer class="footer">
  <button type="button" class="cancel">Cancel</button>
  <p class="contact"><span>Aviation Services Centre</span><span>•</span><span>(800) 364-9442</span><span>•</span><a href="mailto:asc.flightcentre.mnr@ontario.ca">asc.flightcentre.mnr@ontario.ca</a></p>
  <div class="go">
    <span class="version">v1.3.001 (W11013)</span>
    <button type="button" class="next">Next <svg><use href="#i-next"/></svg></button>
  </div>
</footer>
</body>
</html>
```
FILE: styles.css
```css
* { box-sizing: border-box; }
body { margin: 0; background: #fff; color: #333; font: 14px/20px "Noto Sans CJK SC", "Noto Sans", sans-serif; }
button, input, select { font: inherit; color: inherit; margin: 0; }
button { background: none; border: 0; padding: 0; cursor: pointer; }
p { margin: 0; }
a { text-decoration: none; }
svg { fill: currentColor; }
.sprite { position: absolute; width: 0; height: 0; }
.star { width: 16px; height: 16px; vertical-align: -3px; }
.info { width: 17px; height: 17px; vertical-align: -2px; color: #468124; }

.topbar { position: relative; z-index: 2; display: flex; height: 78px; padding: 2px 9px 0 4px; background: #23272c; box-shadow: 0 1px 6px rgba(0, 0, 0, .8); }
.brand { flex: 1; height: 66px; background: #000; }
.hints { display: flex; align-items: center; justify-content: flex-end; gap: 7px; width: 162px; height: 68px; margin: 3px 0 0 20px; border-left: 1px solid #43484c; color: #fff; font-size: 17px; }
.switch { position: relative; width: 72px; height: 29px; }
.switch input { appearance: none; display: block; width: 72px; height: 29px; padding: 1px 1px 1px 44px; border-radius: 15px; background: #fff; }
.switch input::after { content: ""; display: block; width: 27px; height: 27px; border-radius: 50%; background: #468124; box-shadow: 0 0 8px rgba(0, 0, 0, .3); }
.switch-text { position: absolute; left: 12px; top: 4px; color: #333; font-size: 14px; pointer-events: none; }

.steps { display: grid; grid-template-columns: repeat(5, 1fr); }
.step { height: 39px; padding-top: 6px; border-left: 3px solid #fff; background: #8cc63f; color: #333; text-align: center; font-size: 14px; font-weight: 700; }
.step.current { background: #fff; }

.page { padding: 31px 15px 0; }
.trip-row { position: relative; z-index: 1; display: grid; grid-template-columns: 1fr auto 1fr; margin-bottom: -35px; }
.note { display: flex; align-items: center; gap: 5px; height: 10px; color: #7f8c8d; white-space: nowrap; }
.tabs { display: flex; height: 59px; border: 1px solid #006bc9; border-radius: 4px; background: #fff; }
.tab { padding: 0 26px 5px 25px; border-right: 1px solid #006bc9; color: #006bc9; font-size: 17px; line-height: 24px; white-space: nowrap; }
.tab:last-child { border-right: 0; }
.tab.active { background: #006bc9; color: #fff; font-weight: 500; box-shadow: inset 0 3px 5px rgba(0, 0, 0, .125); }

.panel { position: relative; padding: 83px 15px 16px; border: 1px solid #ccc; border-bottom: 0; }
.corner { position: absolute; top: -1px; right: -1px; width: 41px; height: 41px; }
.fields { display: grid; grid-template-columns: 1fr 1fr; column-gap: 30px; row-gap: 24px; height: 204px; align-content: start; }
.field label { display: block; height: 24px; font-weight: 700; line-height: 22px; white-space: nowrap; }
.field label .star { margin-left: 2px; }
.field label .info { margin-left: 3px; }
.users { width: 17px; height: 16px; vertical-align: -2px; }
.box { display: block; height: 34px; padding: 0 12px 4px; border: 1px solid #7f8c8d; border-radius: 4px; background: #ecf0f1; outline: 0; }
.airport { width: 83.333%; border: 2px solid #5cb85c; background: #fff; box-shadow: inset 0 1px 1px rgba(0, 0, 0, .075); }
.pax { width: 60px; padding-bottom: 2px; }
.schedule { position: relative; display: grid; grid-template-columns: 1fr 1fr; }
.date-row { display: flex; gap: 1px; }
.select-wrap { position: relative; }
.select-wrap select { appearance: none; width: 88px; padding-left: 8px; }
.updown { position: absolute; right: 6px; top: 10px; width: 8px; height: 14px; pointer-events: none; }
.date { width: 117px; border-radius: 4px 0 0 4px; }
.cal-btn { width: 39px; height: 34px; margin-left: -2px; border-radius: 0 4px 4px 0; background: #006bc9; color: #fff; box-shadow: inset 0 3px 5px rgba(0, 0, 0, .125); }
.cal-btn svg { width: 13px; height: 14px; }
.time { display: flex; align-items: flex-end; font-size: 11px; padding-bottom: 1px; }
.spin { display: flex; flex-direction: column; align-items: center; gap: 5px; }
.spin svg { display: block; width: 14px; height: 9px; color: #006bc9; }
.spin .box { width: 40px; text-align: center; padding: 0 0 4px; }
.colon { width: 4px; height: 28px; font-size: 13px; text-align: center; }
.ampm { width: 44px; height: 34px; padding-bottom: 4px; border: 1px solid #ccc; border-radius: 4px; background: #fff; }

.picker { position: absolute; z-index: 3; left: 89px; top: 60px; width: 507px; height: 458px; padding-top: 5px; border: 2px solid #006bc9; border-radius: 4px; background: #fff; box-shadow: 0 6px 12px rgba(0, 0, 0, .25); }
.picker-head { display: grid; grid-template-columns: 67px 1fr 67px; gap: 1px; height: 59px; }
.picker-head button { border: 1px solid #eee; border-radius: 4px; padding-bottom: 12px; }
.picker-head svg { width: 18px; height: 26px; vertical-align: middle; }
.picker-head .month { font-size: 22px; padding-bottom: 9px; font-weight: 400; }
.picker table { width: 100%; table-layout: fixed; border-collapse: separate; border-spacing: 0; }
.c-week { width: 68px; }
.c-day { width: 61px; }
.c-thu { width: 62px; }
.c-sat { width: 68px; }
.picker th, .picker td { padding: 0 0 5px; text-align: center; font-weight: 400; }
.picker thead th { height: 24px; padding-bottom: 3px; font-size: 15px; line-height: 21px; }
.picker tbody th { padding-bottom: 3px; font-size: 13px; font-style: italic; }
.picker td { height: 51px; border-top: 1px solid #ccc; border-left: 1px solid #ccc; font-size: 17px; }
.picker td.out { color: #6b6b6b; }
.picker td.today { color: #2c7799; font-weight: 700; }
.picker td.picked { background: #006bc9; border-color: #006bc9; color: #fff; font-weight: 500; box-shadow: inset 0 3px 5px rgba(0, 0, 0, .125); }
.picker-foot { display: flex; align-items: center; gap: 19px; height: 54px; padding: 2px 20px 0 19px; border-top: 2px solid #ccc; background: #f1f1f1; font-size: 18px; margin-top: 1px; }
.go-today { color: #006bc9; }
.clear { color: #c9302c; }
.close { margin-left: auto; color: #5a6f8a; padding-top: 3px; }
.close svg { width: 14px; height: 14px; }

.map { position: relative; height: 460px; border: 6px solid #b9b9b9; font-family: Roboto, sans-serif; overflow: hidden; }
.map-art { display: block; width: 100%; height: 100%; }
.road { fill: none; stroke: #e6bc5c; stroke-width: 4px; stroke-linejoin: round; }
.highway { fill: none; stroke: #ffa63d; stroke-width: 5px; stroke-linejoin: round; }
.map-art text { font-family: Roboto, sans-serif; text-anchor: middle; paint-order: stroke; stroke: #fff; stroke-width: 2px; stroke-linejoin: round; fill: #333; }
.map-art .town text { font-size: 10px; }
.map-art .city text { font-size: 12px; fill: #222; }
.map-art .metro text { font-size: 14px; fill: #111; }
.map-art .state text { font-size: 15px; letter-spacing: 5px; font-weight: 500; text-anchor: start; fill: #998f78; }
.map-art .forest text { font-size: 11px; font-style: italic; fill: #3d7a1c; }
.map-art .shield-text text { font-size: 9px; font-weight: 700; fill: #fff; stroke: none; }
.map-art .crest-text text { font-size: 9px; font-weight: 500; stroke: none; }
.map-art .pin-text { font-size: 11px; fill: #fff; stroke: none; }
.map-art .google { font: 20px "Liberation Serif", serif; text-anchor: start; fill: #fff; stroke: #b5b5b5; stroke-width: 1px; }
.map-type { position: absolute; top: 5px; right: 5px; display: flex; height: 19px; background: #fff; border: 1px solid #aaa; box-shadow: 0 1px 3px rgba(0, 0, 0, .3); font-size: 11px; line-height: 16px; }
.map-type button { padding: 0 8px; color: #555; }
.map-type .on { color: #000; font-weight: 500; border-right: 1px solid #aaa; }
.map-zoom { position: absolute; left: 6px; bottom: 53px; display: flex; flex-direction: column; width: 28px; height: 57px; border: 1px solid #8a93a8; border-radius: 3px; background: linear-gradient(#f6f8ff, #dde7fa); box-shadow: 0 1px 3px rgba(0, 0, 0, .4); color: #2b4584; }
.map-zoom button { flex: 1; }
.map-zoom button + button { border-top: 1px solid #b3cbee; }
.map-zoom svg { width: 13px; height: 13px; vertical-align: middle; }
.map-legal { position: absolute; right: 131px; bottom: 0; display: flex; gap: 12px; color: #333; font-size: 10px; line-height: 14px; }
.map-legal a { color: #333; }
.inset { position: absolute; right: 0; bottom: 0; width: 120px; height: 120px; }
.inset text { font: 9px Roboto, sans-serif; text-anchor: middle; fill: #333; paint-order: stroke; stroke: #e8f2e4; stroke-width: 1px; }

.footer { display: grid; grid-template-columns: 1fr auto 1fr; height: 88px; padding: 0 46px 0 60px; border-bottom: 1px solid #6d7073; background: #23272c; }
.cancel { justify-self: start; width: 96px; height: 43px; margin-top: 30px; padding-bottom: 6px; border: 1px solid #ccc; border-radius: 5px; background: #fff; font-size: 17px; }
.contact { display: flex; gap: 5px; padding-top: 38px; color: #c5cacf; font-size: 11px; font-weight: 500; }
.contact a { color: #2b9fe8; }
.go { display: flex; flex-direction: column; align-items: flex-end; margin-right: -6px; }
.version { height: 30px; line-height: 30px; color: #fff; font-size: 11px; font-weight: 700; }
.next { width: 100px; height: 45px; margin-right: 3px; padding-bottom: 6px; border-radius: 5px; background: #8cc63f; font-size: 17px; }
.next svg { width: 16px; height: 16px; vertical-align: -1px; }
```
